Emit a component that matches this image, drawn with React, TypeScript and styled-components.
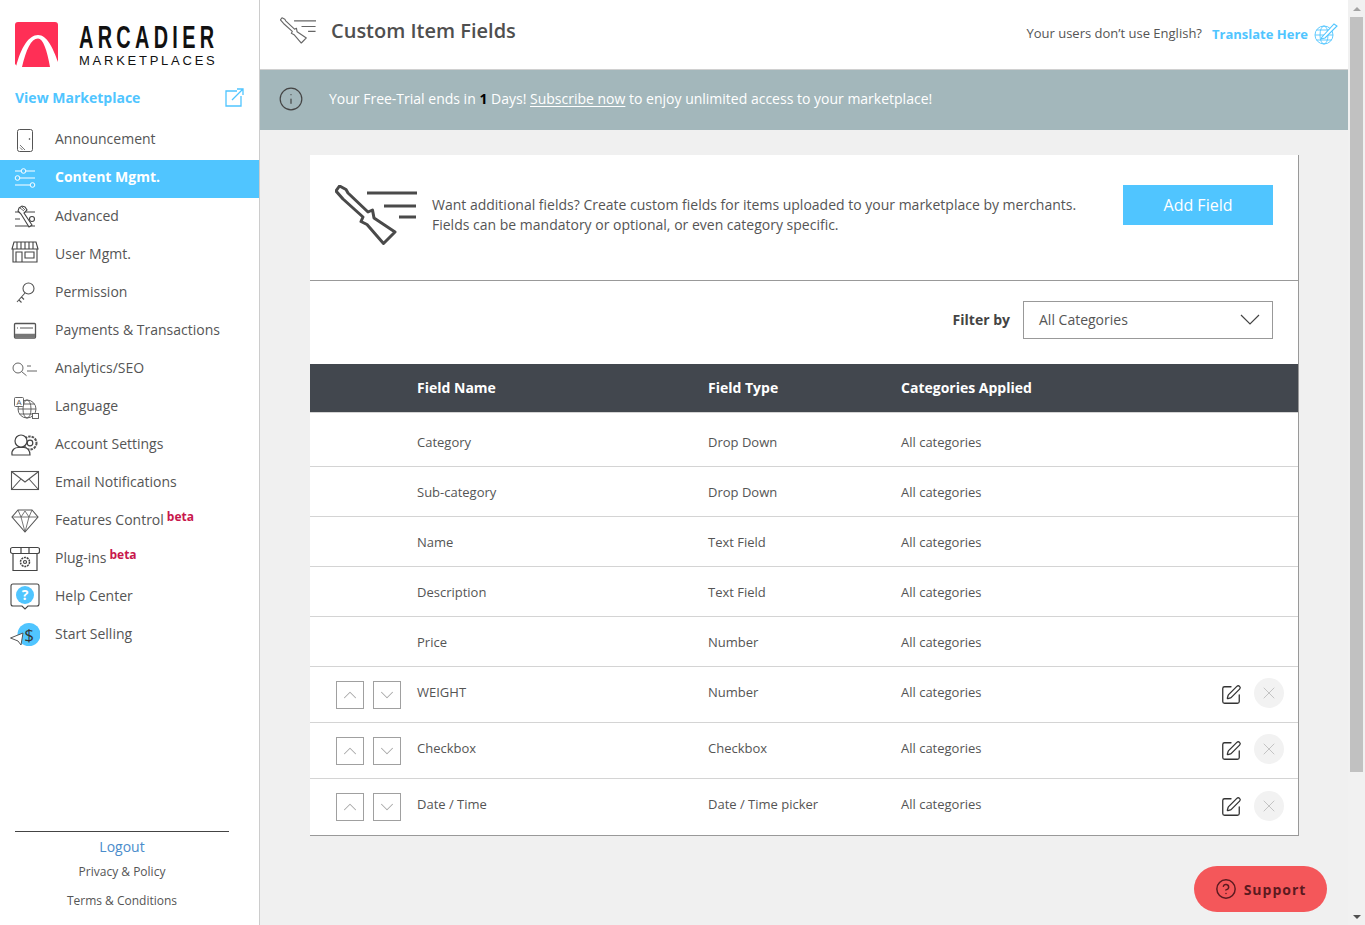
import React from 'react';
import styled, { createGlobalStyle } from 'styled-components';
import { ChevronDown, ChevronUp, CircleHelp, Info, SquarePen, X } from 'lucide-react';

const BLUE = '#50c5ff';

const GlobalStyle = createGlobalStyle`
  html, body {
    margin: 0;
    padding: 0;
    height: 100%;
    overflow: hidden;
    background: #f0f0f0;
    font-family: "Open Sans", "Liberation Sans", sans-serif;
    color: #555;
  }
  * { box-sizing: border-box; }
`;

const Page = styled.div`
  display: flex;
  height: 925px;
  width: 1365px;
`;

const Sidebar = styled.aside`
  width: 260px;
  flex: none;
  background: #fff;
  border-right: 1px solid #ccc;
  display: flex;
  flex-direction: column;
`;

const LogoRow = styled.div`
  display: flex;
  gap: 21px;
  padding: 22px 0 0 15px;
  height: 82px;
`;

const LogoText = styled.div`
  display: flex;
  flex-direction: column;
  color: #111;
  font-family: "Liberation Sans", sans-serif;
`;

const LogoName = styled.div`
  font-size: 32px;
  font-weight: 700;
  line-height: 30px;
  letter-spacing: 7px;
  width: 136px;
  white-space: nowrap;
  transform: scaleX(0.62);
  transform-origin: left center;
`;

const LogoSub = styled.div`
  font-size: 13px;
  line-height: 16px;
  margin-top: 1px;
  letter-spacing: 2.75px;
  white-space: nowrap;
`;

const ViewRow = styled.a`
  display: flex;
  justify-content: space-between;
  align-items: center;
  height: 24px;
  margin-top: 3px;
  padding: 0 15px;
  color: ${BLUE};
  font-size: 14px;
  font-weight: 700;
`;

const Nav = styled.nav`
  margin-top: 13px;
  display: flex;
  flex-direction: column;
`;

const NavItem = styled.a<{ $active?: boolean; $lift?: boolean }>`
  display: flex;
  align-items: center;
  gap: 15px;
  height: 38px;
  padding: 0 0 ${p => (p.$lift ? 6 : 4)}px 10px;
  font-size: 14px;
  font-weight: ${p => (p.$active ? 700 : 400)};
  color: ${p => (p.$active ? '#fff' : '#555')};
  background: ${p => (p.$active ? BLUE : 'transparent')};
  white-space: nowrap;
`;

const Beta = styled.span`
  color: #c8174c;
  font-size: 12px;
  font-weight: 700;
  line-height: 0;
  margin-left: 3px;
  vertical-align: 4px;
`;

const SideFooter = styled.div`
  margin-top: auto;
  margin-left: 15px;
  width: 214px;
  height: 94px;
  border-top: 1px solid #444;
  text-align: center;
`;

const Logout = styled.a`
  display: block;
  margin-top: 5px;
  font-size: 14px;
  line-height: 20px;
  color: #4a8ccb;
`;

const FooterLink = styled.a`
  display: block;
  font-size: 12px;
  line-height: 17px;
  margin-top: 6px;
  color: #555;
  & + & { margin-top: 12px; }
`;

const Main = styled.main`
  flex: 1;
  min-width: 0;
  display: flex;
  flex-direction: column;
`;

const Header = styled.header`
  height: 70px;
  flex: none;
  background: #fff;
  border-bottom: 1px solid #d0d0d0;
  display: flex;
  align-items: flex-start;
  padding: 17px 10px 0 20px;
`;

const Title = styled.h1`
  margin: 0 0 0 15px;
  font-size: 20px;
  line-height: 28px;
  font-weight: 600;
  color: #4f4f4f;
`;

const HeaderRight = styled.div`
  margin-left: auto;
  display: flex;
  align-items: center;
  gap: 6px;
  padding-top: 5px;
`;

const Ask = styled.span`
  font-size: 13px;
  color: #555;
  margin: 0 4px 2px 0;
`;

const Translate = styled.a`
  font-size: 13px;
  font-weight: 700;
  color: ${BLUE};
`;

const Banner = styled.div`
  height: 60px;
  flex: none;
  background: #a3b7bb;
  display: flex;
  align-items: center;
  padding: 0 0 2px 18px;
  gap: 25px;
  color: #fff;
  font-size: 14px;
  svg { color: #444; }
  b { color: #000; font-weight: 700; }
  u { text-underline-offset: 2px; }
`;

const BannerText = styled.span`
  margin-bottom: 2px;
`;

const Content = styled.div`
  padding: 25px 49px 0 50px;
`;

const Card = styled.section`
  background: #fff;
  border-right: 1px solid #999;
  border-bottom: 1px solid #999;
`;

const Intro = styled.div`
  height: 126px;
  border-bottom: 1px solid #999;
  display: flex;
  padding: 30px 25px 0;
`;

const IntroText = styled.p`
  margin: 10px 0 0 15px;
  font-size: 14px;
  line-height: 20px;
  color: #555;
`;

const AddButton = styled.button`
  margin-left: auto;
  width: 150px;
  height: 40px;
  border: 0;
  background: ${BLUE};
  color: #fff;
  font: 400 16px "Open Sans", sans-serif;
`;

const FilterRow = styled.div`
  height: 83px;
  display: flex;
  justify-content: flex-end;
  align-items: flex-start;
  padding: 20px 25px 0;
  gap: 13px;
`;

const FilterLabel = styled.label`
  font-size: 14px;
  line-height: 38px;
  font-weight: 700;
  color: #444;
`;

const Select = styled.div`
  width: 250px;
  height: 38px;
  border: 1px solid #999;
  display: flex;
  align-items: center;
  justify-content: space-between;
  padding: 0 12px 2px 15px;
  font-size: 14px;
  color: #555;
  svg { color: #444; margin-top: 2px; }
`;

const COLUMNS = '107px 291px 193px 1fr auto';

const HeadRow = styled.div`
  height: 48px;
  background: #42474e;
  display: grid;
  grid-template-columns: ${COLUMNS};
  align-items: center;
  padding-bottom: 2px;
  color: #fff;
  font-size: 14px;
  font-weight: 700;
`;

const Row = styled.div<{ $height: number; $shift: number }>`
  height: ${p => p.$height}px;
  border-top: 1px solid #d4d4d4;
  display: grid;
  grid-template-columns: ${COLUMNS};
  align-items: center;
  font-size: 13px;
  color: #555;
  padding-top: ${p => p.$shift}px;
  &:first-of-type { border-top: 0; }
`;

const Order = styled.div`
  display: flex;
  gap: 9px;
  padding-left: 26px;
`;

const OrderButton = styled.button`
  width: 28px;
  height: 28px;
  padding: 0;
  background: #fff;
  border: 1px solid #a0a0a0;
  color: #a8a8a8;
  display: flex;
  align-items: center;
  justify-content: center;
`;

const CustomCell = styled.span`
  margin-top: -6px;
`;

const Actions = styled.div`
  display: flex;
  align-items: center;
  gap: 12px;
  padding-right: 14px;
  margin-top: -3px;
  color: #333;
  & > svg { margin-top: 3px; }
`;

const RemoveButton = styled.button`
  width: 30px;
  height: 30px;
  border: 0;
  padding: 0;
  border-radius: 50%;
  background: #f2f2f2;
  color: #bbb;
  display: flex;
  align-items: center;
  justify-content: center;
`;

const Scrollbar = styled.div`
  width: 17px;
  flex: none;
  background: #f1f1f1;
  display: flex;
  flex-direction: column;
  align-items: center;
  padding: 0 2px;
`;

const ArrowSlot = styled.div`
  height: 17px;
  flex: none;
  display: flex;
  align-items: center;
  justify-content: center;
`;

const Arrow = styled.div<{ $down?: boolean }>`
  width: 0;
  height: 0;
  border-left: 4px solid transparent;
  border-right: 4px solid transparent;
  ${p => (p.$down ? 'border-top: 4px solid #505050' : 'border-bottom: 4px solid #a3a3a3')};
`;

const Thumb = styled.div`
  width: 100%;
  height: 755px;
  flex: none;
  margin-bottom: auto;
  background: #c1c1c1;
`;

const Support = styled.button`
  position: fixed;
  left: 1194px;
  top: 866px;
  width: 133px;
  height: 46px;
  border: 0;
  border-radius: 23px;
  background: #f4575a;
  color: #5c1a20;
  display: flex;
  align-items: center;
  justify-content: center;
  gap: 7px;
  font: 700 14px "Open Sans", sans-serif;
  letter-spacing: 1px;
`;

const Svg = styled.svg<{ $tone?: string }>`
  flex: none;
  display: block;
  fill: none;
  stroke: currentColor;
  color: ${p => p.$tone || 'inherit'};
`;

const NavIcon = styled(Svg)`
  width: 30px;
  height: 30px;
  color: ${p => p.$tone || '#555'};
`;

const Logo = () => (
  <Svg width="43" height="45" viewBox="0 0 43 45" stroke="none">
    <path d="M3 0H40Q43 0 43 3V42L43 45H3L0 42V3Q0 0 3 0Z" fill="#ff2f56" stroke="none" />
    <path
      d="M1 45C6 25 14 13 23 13C32 13 38 26 43 40V45H35C32 28 28 16.500 23 16.500C16 16.500 11 28 7 45Z"
      fill="#fff"
      stroke="none"
    />
  </Svg>
);

const ExternalIcon = () => (
  <Svg width="19" height="19" viewBox="0 0 19 19" strokeWidth="1.3">
    <path d="M12 3H1V18H16V8" />
    <path d="M7 12L18 1M12 1H18V7" />
  </Svg>
);

const ToolIcon = ({ width, height, tone, stroke }: { width: number; height: number; tone: string; stroke: number }) => (
  <Svg width={width} height={height} viewBox="0 0 82 60" strokeWidth={stroke} $tone={tone}>
    <path
      d="M1 6L4.500 1L11 4.500L13 8L33 27L37.500 25L39 33L60 47L48.500 58.500L32 39.500L26 36.500L28 32L8 14Z"
      strokeLinejoin="round"
    />
    <path d="M32 8H82M49 21H81M64 32H81" />
  </Svg>
);

const GlobePenIcon = () => (
  <Svg width="24" height="23" viewBox="0 0 24 23" strokeWidth="0.9" $tone={BLUE}>
    <circle cx="10" cy="13" r="9" />
    <ellipse cx="10" cy="13" rx="4" ry="9" />
    <path d="M1 13H19M2.500 8H17.500M2.500 18H17.500" />
    <path d="M8 15L20 2L23 4L11 16L7 17Z" fill="#fff" strokeWidth="1.1" />
  </Svg>
);

const icons: Record<string, React.ReactNode> = {
  announcement: (
    <NavIcon viewBox="0 0 30 30">
      <rect x="7.500" y="6.500" width="15" height="22" rx="2" />
      <path d="M10 22L15 27M10 24.500L12.500 27" strokeWidth="0.8" />
      <circle cx="19.500" cy="16" r="0.500" />
    </NavIcon>
  ),
  content: (
    <NavIcon viewBox="0 0 30 30" $tone="#fff">
      <path d="M5 10H11M16 10H25M10 17H25M5 24H20" />
      <circle cx="13.500" cy="10" r="2.300" />
      <circle cx="7.500" cy="17" r="2.300" />
      <circle cx="22.500" cy="24" r="2.300" />
    </NavIcon>
  ),
  advanced: (
    <NavIcon viewBox="0 0 30 30" strokeWidth="1.1" $tone="#444">
      <path d="M5 12H25M5 19H10M5 26H25" />
      <path d="M9 8L12 6L15 7L17 10L14 13L22 25L19 27L11 14L8 11Z" fill="#fff" />
      <path d="M10 8L14 11M12 7L15 10" strokeWidth="0.8" />
      <circle cx="22" cy="19" r="2.500" fill="#fff" />
    </NavIcon>
  ),
  user: (
    <NavIcon viewBox="0 0 30 30" strokeWidth="1.1" $tone="#444">
      <path d="M4 4H26L28 11H2Z" />
      <path d="M7 4V11M11 4V11M15 4V11M19 4V11M23 4V11" />
      <path d="M3 11V24H27V11" />
      <path d="M6 24V14H12V24M15 14H24V20H15Z" />
    </NavIcon>
  ),
  permission: (
    <NavIcon viewBox="0 0 30 30" strokeWidth="1.1">
      <circle cx="18.500" cy="12.500" r="5.500" />
      <path d="M15 17L7 26M9 24L11.500 26.500M11.500 21L14 23.500" />
    </NavIcon>
  ),
  payments: (
    <NavIcon viewBox="0 0 30 30" strokeWidth="1.3">
      <rect x="4.500" y="9.500" width="21" height="14.500" rx="1" />
      <path d="M5 21.500H25" strokeWidth="3.500" stroke="#777" />
      <path d="M7 14H8M10 14H23" strokeWidth="1" />
    </NavIcon>
  ),
  analytics: (
    <NavIcon viewBox="0 0 30 30" strokeWidth="0.9">
      <circle cx="8" cy="16" r="5" />
      <path d="M11.500 19.500L16.500 23.700M17 14H21M17 19H27" />
    </NavIcon>
  ),
  language: (
    <NavIcon viewBox="0 0 30 30" strokeWidth="0.9">
      <circle cx="17" cy="19" r="9" />
      <ellipse cx="17" cy="19" rx="4" ry="9" />
      <path d="M8 19H26M9.500 14H24.500M9.500 24H24.500" />
      <rect x="4.500" y="7.500" width="9" height="9" rx="1" fill="#fff" />
      <rect x="22.500" y="23.500" width="6" height="5" fill="#fff" />
      <text x="9" y="14.500" fontSize="8" textAnchor="middle" fill="#555" stroke="none" fontFamily="Open Sans">A</text>
    </NavIcon>
  ),
  account: (
    <NavIcon viewBox="0 0 30 30" strokeWidth="1.2" $tone="#444">
      <circle cx="20" cy="15" r="6.500" strokeDasharray="2.500 1" strokeWidth="2" stroke="#555" />
      <circle cx="20" cy="15" r="2.800" />
      <circle cx="11" cy="13" r="6" fill="#fff" />
      <path d="M2 27C1 21 6 19.500 8 19.500H14C17 19.500 20 22 20 27Z" fill="#fff" />
    </NavIcon>
  ),
  email: (
    <NavIcon viewBox="0 0 30 30" strokeWidth="1.1">
      <rect x="1.500" y="5.500" width="27" height="18" />
      <path d="M2 6L15 16L28 6M2 23L11 13M28 23L19 13" />
    </NavIcon>
  ),
  features: (
    <NavIcon viewBox="0 0 30 30" strokeWidth="1.1">
      <path d="M8 6H22L28 13L15 28L2 13Z" />
      <path d="M2 13H28M8 6L11 13L15 28L19 13L22 6M11 13L15 7L19 13" strokeWidth="0.8" />
    </NavIcon>
  ),
  plugins: (
    <NavIcon viewBox="0 0 30 30" strokeWidth="1.2" $tone="#444">
      <rect x="0.500" y="5.500" width="29" height="6" rx="2" />
      <path d="M3 11.500V28.500H27V11.500M11 5.500V11.500M19 5.500V11.500" />
      <circle cx="15" cy="20" r="4.500" strokeDasharray="2 0.800" strokeWidth="1.500" />
      <circle cx="15" cy="20" r="1.500" />
    </NavIcon>
  ),
  help: (
    <NavIcon viewBox="0 0 30 30" strokeWidth="1.1" $tone="#444">
      <path d="M3 4H27Q29 4 29 6V24Q29 26 27 26H18L15 29L12 26H3Q1 26 1 24V6Q1 4 3 4Z" />
      <circle cx="15" cy="15" r="9" fill={BLUE} stroke="none" />
      <text x="15" y="20" fontSize="14" fontWeight="700" textAnchor="middle" fill="#fff" stroke="none" fontFamily="Open Sans">?</text>
    </NavIcon>
  ),
  selling: (
    <NavIcon viewBox="0 0 30 30" strokeWidth="1">
      <circle cx="19" cy="16.500" r="11.500" fill={BLUE} stroke="none" />
      <text x="19" y="23" fontSize="17" textAnchor="middle" fill="#333" stroke="none" fontFamily="Open Sans">$</text>
      <path d="M0.500 20L13 15L11 27L8 23Z" fill="#fff" />
    </NavIcon>
  ),
};

const navItems = [
  { icon: 'announcement', label: 'Announcement', lift: true },
  { icon: 'content', label: 'Content Mgmt.', active: true, lift: true },
  { icon: 'advanced', label: 'Advanced' },
  { icon: 'user', label: 'User Mgmt.' },
  { icon: 'permission', label: 'Permission' },
  { icon: 'payments', label: 'Payments & Transactions' },
  { icon: 'analytics', label: 'Analytics/SEO' },
  { icon: 'language', label: 'Language' },
  { icon: 'account', label: 'Account Settings' },
  { icon: 'email', label: 'Email Notifications' },
  { icon: 'features', label: 'Features Control', beta: true },
  { icon: 'plugins', label: 'Plug-ins', beta: true },
  { icon: 'help', label: 'Help Center' },
  { icon: 'selling', label: 'Start Selling' },
];

const fixedRows = [
  { name: 'Category', type: 'Drop Down', height: 54, shift: 4 },
  { name: 'Sub-category', type: 'Drop Down', height: 50, shift: 1 },
  { name: 'Name', type: 'Text Field', height: 50, shift: 1 },
  { name: 'Description', type: 'Text Field', height: 50, shift: 1 },
  { name: 'Price', type: 'Number', height: 50, shift: 1 },
];

const customRows = [
  { name: 'WEIGHT', type: 'Number', height: 56 },
  { name: 'Checkbox', type: 'Checkbox', height: 56 },
  { name: 'Date / Time', type: 'Date / Time picker', height: 57 },
];

export default function App() {
  return (
    <Page>
      <GlobalStyle />
      <Sidebar>
        <LogoRow>
          <Logo />
          <LogoText>
            <LogoName>ARCADIER</LogoName>
            <LogoSub>MARKETPLACES</LogoSub>
          </LogoText>
        </LogoRow>
        <ViewRow>
          View Marketplace
          <ExternalIcon />
        </ViewRow>
        <Nav>
          {navItems.map(item => (
            <NavItem key={item.label} $active={item.active} $lift={item.lift}>
              {icons[item.icon]}
              <span>
                {item.label}
                {item.beta && <Beta>beta</Beta>}
              </span>
            </NavItem>
          ))}
        </Nav>
        <SideFooter>
          <Logout>Logout</Logout>
          <FooterLink>Privacy &amp; Policy</FooterLink>
          <FooterLink>Terms &amp; Conditions</FooterLink>
        </SideFooter>
      </Sidebar>
      <Main>
        <Header>
          <ToolIcon width={36} height={27} tone="#666" stroke={2.6} />
          <Title>Custom Item Fields</Title>
          <HeaderRight>
            <Ask>Your users don&rsquo;t use English?</Ask>
            <Translate>Translate Here</Translate>
            <GlobePenIcon />
          </HeaderRight>
        </Header>
        <Banner>
          <Info size={26} strokeWidth={1.1} />
          <BannerText>
            Your Free-Trial ends in <b>1</b> Days! <u>Subscribe now</u> to enjoy unlimited access to your marketplace!
          </BannerText>
        </Banner>
        <Content>
          <Card>
            <Intro>
              <ToolIcon width={82} height={60} tone="#4a4a4a" stroke={3} />
              <IntroText>
                Want additional fields? Create custom fields for items uploaded to your marketplace by merchants.
                <br />
                Fields can be mandatory or optional, or even category specific.
              </IntroText>
              <AddButton>Add Field</AddButton>
            </Intro>
            <FilterRow>
              <FilterLabel>Filter by</FilterLabel>
              <Select>
                All Categories
                <Svg width="20" height="12" viewBox="0 0 20 12" strokeWidth="1.2">
                  <path d="M1 1L10 10L19 1" />
                </Svg>
              </Select>
            </FilterRow>
            <HeadRow>
              <span />
              <span>Field Name</span>
              <span>Field Type</span>
              <span>Categories Applied</span>
            </HeadRow>
            {fixedRows.map(row => (
              <Row key={row.name} $height={row.height} $shift={row.shift}>
                <span />
                <span>{row.name}</span>
                <span>{row.type}</span>
                <span>All categories</span>
              </Row>
            ))}
            {customRows.map(row => (
              <Row key={row.name} $height={row.height} $shift={0}>
                <Order>
                  <OrderButton>
                    <ChevronUp size={22} strokeWidth={1.1} />
                  </OrderButton>
                  <OrderButton>
                    <ChevronDown size={22} strokeWidth={1.1} />
                  </OrderButton>
                </Order>
                <CustomCell>{row.name}</CustomCell>
                <CustomCell>{row.type}</CustomCell>
                <CustomCell>All categories</CustomCell>
                <Actions>
                  <SquarePen size={22} strokeWidth={1.4} />
                  <RemoveButton>
                    <X size={20} strokeWidth={1} />
                  </RemoveButton>
                </Actions>
              </Row>
            ))}
          </Card>
        </Content>
      </Main>
      <Scrollbar>
        <ArrowSlot>
          <Arrow />
        </ArrowSlot>
        <Thumb />
        <ArrowSlot>
          <Arrow $down />
        </ArrowSlot>
      </Scrollbar>
      <Support>
        <CircleHelp size={22} strokeWidth={1.6} />
        Support
      </Support>
    </Page>
  );
}
